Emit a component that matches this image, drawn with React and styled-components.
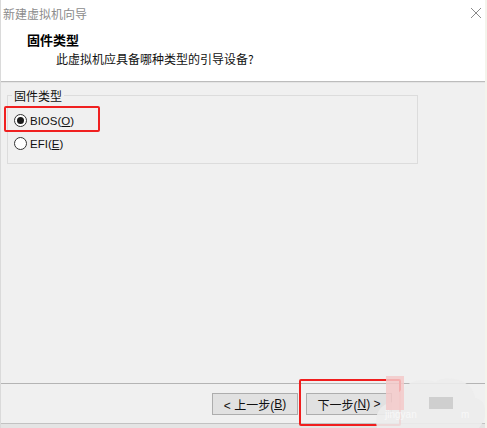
import React from "react";
import styled, { createGlobalStyle } from "styled-components";

const Global = createGlobalStyle`
  html, body { margin: 0; padding: 0; background: #f0f0f0; }
  body { font-family: "Liberation Sans", "Noto Sans CJK SC", sans-serif; color: #1a1a1a; }
  *, *::before, *::after { box-sizing: border-box; }
`;

const Window = styled.div`
  position: relative;
  width: 487px;
  height: 428px;
  display: flex;
  flex-direction: column;
  background: #f0f0f0;
  border-left: 1px solid #dadada;
  border-right: 2px solid #f4f4ec;
  overflow: hidden;
`;

const Header = styled.div`
  height: 82px;
  background: #ffffff;
  border-bottom: 1px solid #bcbcbc;
  box-shadow: 0 1px 0 #e4e4e4;
  display: flex;
  flex-direction: column;
`;

const TitleBar = styled.div`
  height: 26px;
  display: flex;
  align-items: center;
  justify-content: space-between;
  padding: 0 2px 0 2px;
`;

const Title = styled.span`
  font-family: "Noto Sans CJK SC", sans-serif;
  font-size: 12px;
  color: #8c8c8c;
`;

const CloseBtn = styled.span`
  display: flex;
  width: 12px;
  height: 12px;
  margin-right: 1px;
`;

const Heading = styled.div`
  font-family: "Noto Sans CJK SC", sans-serif;
  font-size: 13px;
  font-weight: 700;
  line-height: 16px;
  margin: 6px 0 0 26px;
  color: #000;
`;

const Subheading = styled.div`
  font-family: "Noto Sans CJK SC", sans-serif;
  font-size: 12px;
  line-height: 16px;
  margin: 3px 0 0 55px;
  color: #111;
`;

const Body = styled.div`
  flex: 1;
  padding: 6px 0 0 6px;
`;

const Group = styled.fieldset`
  margin: 0;
  width: 411px;
  height: 76px;
  border: 1px solid #dcdcdc;
  padding: 6px 0 0 6px;
  display: flex;
  flex-direction: column;
`;

const Legend = styled.legend`
  font-family: "Noto Sans CJK SC", sans-serif;
  font-size: 12px;
  line-height: 15px;
  padding: 0 2px;
  margin-left: -2px;
  color: #111;
`;

const OptionRow = styled.label`
  position: relative;
  display: flex;
  align-items: center;
  gap: 3px;
  height: 23px;
  width: max-content;
  font-size: 11.5px;
  color: #111;
  ${(p) =>
    p.$marked &&
    `
    &::after {
      content: "";
      position: absolute;
      left: -10px;
      top: -3px;
      width: 96px;
      height: 26px;
      border: 2px solid #f02020;
      border-radius: 2px;
    }
  `}
`;

const RadioDot = styled.span`
  width: 13px;
  height: 13px;
  border-radius: 50%;
  border: 1px solid #333;
  background: #fff;
  display: flex;
  align-items: center;
  justify-content: center;
  &::before {
    content: "";
    width: 7px;
    height: 7px;
    border-radius: 50%;
    background: ${(p) => (p.$checked ? "#1a1a1a" : "transparent")};
  }
`;

const Footer = styled.div`
  height: 41px;
  border-top: 1px solid #b4b4b4;
  border-bottom: 1px solid #c2c2c2;
  display: flex;
  align-items: flex-start;
  padding: 9px 0 0 211px;
  gap: 8px;
`;

const BottomStrip = styled.div`
  height: 4px;
  background: #e4e4e4;
`;

const Button = styled.button`
  position: relative;
  width: 86px;
  height: 22px;
  background: #e1e1e1;
  border: 1px solid #adadad;
  font-family: "Liberation Sans", "Noto Sans CJK SC", sans-serif;
  font-size: 12px;
  color: #111;
  padding: 0;
  display: flex;
  align-items: center;
  justify-content: center;
  ${(p) =>
    p.$marked &&
    `
    &::after {
      content: "";
      position: absolute;
      left: -8px;
      top: -15px;
      width: 102px;
      height: 47px;
      border: 2.5px solid #f01e1e;
      border-radius: 2px;
    }
  `}
`;

const Key = styled.u`
  text-underline-offset: 1px;
`;

const Watermark = styled.svg`
  position: absolute;
  right: -2px;
  bottom: 0;
  pointer-events: none;
`;

function Radio({ checked, label, hotkey, marked }) {
  return (
    <OptionRow $marked={marked}>
      <RadioDot $checked={checked} />
      <span>
        {label}(<Key>{hotkey}</Key>)
      </span>
    </OptionRow>
  );
}

export default function App() {
  return (
    <>
      <Global />
      <Window>
        <Header>
          <TitleBar>
            <Title>新建虚拟机向导</Title>
            <CloseBtn>
              <svg width="12" height="12" viewBox="0 0 12 12">
                <path d="M1 1L11 11M11 1L1 11" stroke="#8a8a8a" strokeWidth="1" fill="none" />
              </svg>
            </CloseBtn>
          </TitleBar>
          <Heading>固件类型</Heading>
          <Subheading>此虚拟机应具备哪种类型的引导设备?</Subheading>
        </Header>
        <Body>
          <Group>
            <Legend>固件类型</Legend>
            <Radio checked label="BIOS" hotkey="O" marked />
            <Radio label="EFI" hotkey="E" />
          </Group>
        </Body>
        <Footer>
          <Button>
            &lt; 上一步(<Key>B</Key>)
          </Button>
          <Button $marked>
            下一步(<Key>N</Key>) &gt;
          </Button>
        </Footer>
        <BottomStrip />
        <Watermark width="118" height="56" viewBox="0 0 118 56">
          <path
            d="M8 56 C4 40 14 30 26 30 C30 12 50 4 66 10 C80 2 104 8 106 26 C118 28 120 44 110 56 Z"
            fill="#ececec"
            opacity="0.9"
          />
          <rect x="17" y="4" width="18" height="34" fill="#f3c9c9" opacity="0.85" />
          <rect x="60" y="25" width="24" height="12" fill="#cfcfcf" />
          <text x="16" y="46" fontSize="10" fill="#f8f8f8" fontFamily="Liberation Sans, sans-serif">jingyan</text>
          <text x="92" y="46" fontSize="10" fill="#f8f8f8" fontFamily="Liberation Sans, sans-serif">m</text>
        </Watermark>
      </Window>
    </>
  );
}
